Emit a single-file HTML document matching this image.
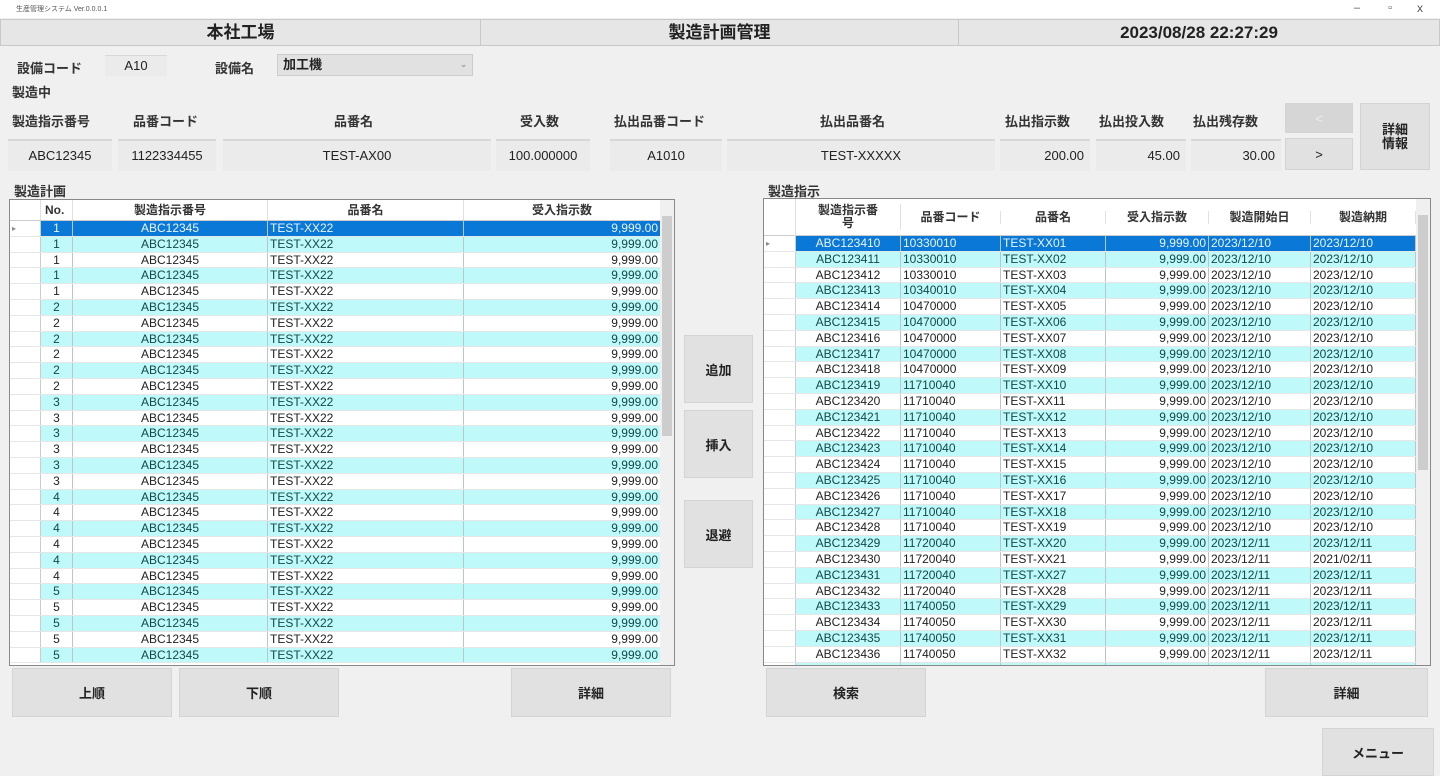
<!DOCTYPE html>
<html><head><meta charset="utf-8"><style>
*{box-sizing:border-box;margin:0;padding:0}
body{width:1440px;height:776px;background:#f0f0f0;font-family:"Liberation Sans","Noto Sans CJK JP",sans-serif;font-size:13px;color:#222;position:relative;overflow:hidden}
.a{position:absolute}
.tb{left:0;top:0;width:1440px;height:18px;background:#fff;font-size:7px;color:#555;padding:4px 0 0 16px}
.hd{top:19px;height:27px;background:#e6e6e6;border:1px solid #c8c8c8;font-weight:bold;font-size:17px;text-align:center;line-height:25px}
.lb{font-size:13px;font-weight:bold;color:#333}
.bx{background:#ebebeb;border-top:2px solid #d8d8d8;height:32px;top:139px;line-height:30px;font-size:13px;text-align:center}
.btn{background:#e1e1e1;border:1px solid #d4d4d4;text-align:center;font-weight:bold;font-size:13px;display:flex;align-items:center;justify-content:center}
.tbl{background:#fff;border:1px solid #888;overflow:hidden}
.r{display:flex;height:15.8px;line-height:15.8px;font-size:12px;border-bottom:1px solid #e6e6e6}
.r div{border-right:1px solid #b8c8c8;white-space:nowrap;overflow:hidden;padding:0 2px}
.r .rh{background:#fff;border-right:1px solid #ccc}
.c div:not(.rh){background:#bff9f9;color:#134848}
.s div:not(.rh){background:#0a78d7;color:#e8f4ff}
.ce{text-align:center}.rt{text-align:right}
.h{display:flex;font-size:12px;font-weight:bold;color:#333;background:#fff;border-bottom:1px solid #ccc}
.h div{text-align:center;border-right:1px solid #e0e0e0}
.sb{position:absolute;right:0;top:0;bottom:0;width:14px;background:#f0f0f0}
</style></head><body>
<div class="a tb">生産管理システム Ver.0.0.0.1</div>
<div class="a" style="right:80px;top:2px;font-size:11px;color:#555">–</div>
<div class="a" style="right:48px;top:2px;font-size:11px;color:#555">▫</div>
<div class="a" style="right:17px;top:1px;font-size:12px;color:#555">x</div>
<div class="a hd" style="left:0;width:481px">本社工場</div>
<div class="a hd" style="left:480px;width:479px">製造計画管理</div>
<div class="a hd" style="left:958px;width:482px">2023/08/28 22:27:29</div>

<div class="a lb" style="left:17px;top:58px">設備コード</div>
<div class="a" style="left:105px;top:55px;width:62px;height:21px;background:#ebebeb;border-top:1px solid #d8d8d8;text-align:center;line-height:20px">A10</div>
<div class="a lb" style="left:215px;top:58px">設備名</div>
<div class="a" style="left:277px;top:54px;width:196px;height:22px;background:#e1e1e1;border:1px solid #ccc;font-weight:bold;line-height:20px;padding-left:5px">加工機<span style="position:absolute;right:5px;font-size:8px;color:#999">⌄</span></div>
<div class="a lb" style="left:12px;top:82px">製造中</div>

<div class="a lb" style="left:12px;top:111px">製造指示番号</div>
<div class="a lb" style="left:133px;top:111px">品番コード</div>
<div class="a lb" style="left:334px;top:111px">品番名</div>
<div class="a lb" style="left:520px;top:111px">受入数</div>
<div class="a lb" style="left:614px;top:111px">払出品番コード</div>
<div class="a lb" style="left:820px;top:111px">払出品番名</div>
<div class="a lb" style="left:1005px;top:111px">払出指示数</div>
<div class="a lb" style="left:1099px;top:111px">払出投入数</div>
<div class="a lb" style="left:1193px;top:111px">払出残存数</div>

<div class="a bx" style="left:8px;width:104px">ABC12345</div>
<div class="a bx" style="left:118px;width:98px">1122334455</div>
<div class="a bx" style="left:223px;width:268px">TEST-AX00</div>
<div class="a bx" style="left:496px;width:94px">100.000000</div>
<div class="a bx" style="left:610px;width:112px">A1010</div>
<div class="a bx" style="left:727px;width:268px">TEST-XXXXX</div>
<div class="a bx" style="left:1000px;width:90px;text-align:right;padding-right:6px">200.00</div>
<div class="a bx" style="left:1096px;width:90px;text-align:right;padding-right:6px">45.00</div>
<div class="a bx" style="left:1191px;width:90px;text-align:right;padding-right:6px">30.00</div>
<div class="a btn" style="left:1285px;top:103px;width:68px;height:30px;background:#d6d6d6;color:#eee;font-weight:normal">&lt;</div>
<div class="a btn" style="left:1285px;top:138px;width:68px;height:32px;font-weight:normal">&gt;</div>
<div class="a btn" style="left:1360px;top:103px;width:70px;height:67px;line-height:14px">詳細<br>情報</div>

<div class="a lb" style="left:14px;top:181px">製造計画</div>
<div class="a lb" style="left:768px;top:181px">製造指示</div>

<div class="a tbl" style="left:9px;top:199px;width:666px;height:467px">
<div class="h" style="height:21px;line-height:21px"><div style="width:31px"></div><div style="width:32px;text-align:left;padding-left:4px">No.</div><div style="width:195px">製造指示番号</div><div style="width:196px">品番名</div><div style="width:197px">受入指示数</div></div>
<div id="L">
<div class="r s"><div class="rh" style="width:31px;color:#888;font-size:8px">▸</div><div class="ce" style="width:32px">1</div><div class="ce" style="width:195px">ABC12345</div><div style="width:196px">TEST-XX22</div><div class="rt" style="width:197px">9,999.00</div></div>
<div class="r c"><div class="rh" style="width:31px"></div><div class="ce" style="width:32px">1</div><div class="ce" style="width:195px">ABC12345</div><div style="width:196px">TEST-XX22</div><div class="rt" style="width:197px">9,999.00</div></div>
<div class="r"><div class="rh" style="width:31px"></div><div class="ce" style="width:32px">1</div><div class="ce" style="width:195px">ABC12345</div><div style="width:196px">TEST-XX22</div><div class="rt" style="width:197px">9,999.00</div></div>
<div class="r c"><div class="rh" style="width:31px"></div><div class="ce" style="width:32px">1</div><div class="ce" style="width:195px">ABC12345</div><div style="width:196px">TEST-XX22</div><div class="rt" style="width:197px">9,999.00</div></div>
<div class="r"><div class="rh" style="width:31px"></div><div class="ce" style="width:32px">1</div><div class="ce" style="width:195px">ABC12345</div><div style="width:196px">TEST-XX22</div><div class="rt" style="width:197px">9,999.00</div></div>
<div class="r c"><div class="rh" style="width:31px"></div><div class="ce" style="width:32px">2</div><div class="ce" style="width:195px">ABC12345</div><div style="width:196px">TEST-XX22</div><div class="rt" style="width:197px">9,999.00</div></div>
<div class="r"><div class="rh" style="width:31px"></div><div class="ce" style="width:32px">2</div><div class="ce" style="width:195px">ABC12345</div><div style="width:196px">TEST-XX22</div><div class="rt" style="width:197px">9,999.00</div></div>
<div class="r c"><div class="rh" style="width:31px"></div><div class="ce" style="width:32px">2</div><div class="ce" style="width:195px">ABC12345</div><div style="width:196px">TEST-XX22</div><div class="rt" style="width:197px">9,999.00</div></div>
<div class="r"><div class="rh" style="width:31px"></div><div class="ce" style="width:32px">2</div><div class="ce" style="width:195px">ABC12345</div><div style="width:196px">TEST-XX22</div><div class="rt" style="width:197px">9,999.00</div></div>
<div class="r c"><div class="rh" style="width:31px"></div><div class="ce" style="width:32px">2</div><div class="ce" style="width:195px">ABC12345</div><div style="width:196px">TEST-XX22</div><div class="rt" style="width:197px">9,999.00</div></div>
<div class="r"><div class="rh" style="width:31px"></div><div class="ce" style="width:32px">2</div><div class="ce" style="width:195px">ABC12345</div><div style="width:196px">TEST-XX22</div><div class="rt" style="width:197px">9,999.00</div></div>
<div class="r c"><div class="rh" style="width:31px"></div><div class="ce" style="width:32px">3</div><div class="ce" style="width:195px">ABC12345</div><div style="width:196px">TEST-XX22</div><div class="rt" style="width:197px">9,999.00</div></div>
<div class="r"><div class="rh" style="width:31px"></div><div class="ce" style="width:32px">3</div><div class="ce" style="width:195px">ABC12345</div><div style="width:196px">TEST-XX22</div><div class="rt" style="width:197px">9,999.00</div></div>
<div class="r c"><div class="rh" style="width:31px"></div><div class="ce" style="width:32px">3</div><div class="ce" style="width:195px">ABC12345</div><div style="width:196px">TEST-XX22</div><div class="rt" style="width:197px">9,999.00</div></div>
<div class="r"><div class="rh" style="width:31px"></div><div class="ce" style="width:32px">3</div><div class="ce" style="width:195px">ABC12345</div><div style="width:196px">TEST-XX22</div><div class="rt" style="width:197px">9,999.00</div></div>
<div class="r c"><div class="rh" style="width:31px"></div><div class="ce" style="width:32px">3</div><div class="ce" style="width:195px">ABC12345</div><div style="width:196px">TEST-XX22</div><div class="rt" style="width:197px">9,999.00</div></div>
<div class="r"><div class="rh" style="width:31px"></div><div class="ce" style="width:32px">3</div><div class="ce" style="width:195px">ABC12345</div><div style="width:196px">TEST-XX22</div><div class="rt" style="width:197px">9,999.00</div></div>
<div class="r c"><div class="rh" style="width:31px"></div><div class="ce" style="width:32px">4</div><div class="ce" style="width:195px">ABC12345</div><div style="width:196px">TEST-XX22</div><div class="rt" style="width:197px">9,999.00</div></div>
<div class="r"><div class="rh" style="width:31px"></div><div class="ce" style="width:32px">4</div><div class="ce" style="width:195px">ABC12345</div><div style="width:196px">TEST-XX22</div><div class="rt" style="width:197px">9,999.00</div></div>
<div class="r c"><div class="rh" style="width:31px"></div><div class="ce" style="width:32px">4</div><div class="ce" style="width:195px">ABC12345</div><div style="width:196px">TEST-XX22</div><div class="rt" style="width:197px">9,999.00</div></div>
<div class="r"><div class="rh" style="width:31px"></div><div class="ce" style="width:32px">4</div><div class="ce" style="width:195px">ABC12345</div><div style="width:196px">TEST-XX22</div><div class="rt" style="width:197px">9,999.00</div></div>
<div class="r c"><div class="rh" style="width:31px"></div><div class="ce" style="width:32px">4</div><div class="ce" style="width:195px">ABC12345</div><div style="width:196px">TEST-XX22</div><div class="rt" style="width:197px">9,999.00</div></div>
<div class="r"><div class="rh" style="width:31px"></div><div class="ce" style="width:32px">4</div><div class="ce" style="width:195px">ABC12345</div><div style="width:196px">TEST-XX22</div><div class="rt" style="width:197px">9,999.00</div></div>
<div class="r c"><div class="rh" style="width:31px"></div><div class="ce" style="width:32px">5</div><div class="ce" style="width:195px">ABC12345</div><div style="width:196px">TEST-XX22</div><div class="rt" style="width:197px">9,999.00</div></div>
<div class="r"><div class="rh" style="width:31px"></div><div class="ce" style="width:32px">5</div><div class="ce" style="width:195px">ABC12345</div><div style="width:196px">TEST-XX22</div><div class="rt" style="width:197px">9,999.00</div></div>
<div class="r c"><div class="rh" style="width:31px"></div><div class="ce" style="width:32px">5</div><div class="ce" style="width:195px">ABC12345</div><div style="width:196px">TEST-XX22</div><div class="rt" style="width:197px">9,999.00</div></div>
<div class="r"><div class="rh" style="width:31px"></div><div class="ce" style="width:32px">5</div><div class="ce" style="width:195px">ABC12345</div><div style="width:196px">TEST-XX22</div><div class="rt" style="width:197px">9,999.00</div></div>
<div class="r c"><div class="rh" style="width:31px"></div><div class="ce" style="width:32px">5</div><div class="ce" style="width:195px">ABC12345</div><div style="width:196px">TEST-XX22</div><div class="rt" style="width:197px">9,999.00</div></div>
</div>
<div class="sb"><div style="position:absolute;left:2px;top:16px;width:10px;height:220px;background:#cdcdcd"></div></div>
</div>

<div class="a btn" style="left:684px;top:335px;width:69px;height:68px">追加</div>
<div class="a btn" style="left:684px;top:410px;width:69px;height:68px">挿入</div>
<div class="a btn" style="left:684px;top:500px;width:69px;height:68px">退避</div>

<div class="a tbl" style="left:763px;top:198px;width:668px;height:468px">
<div class="h" style="height:37px;align-items:center;line-height:13px"><div style="width:32px;height:37px"></div><div style="width:105px">製造指示番<br>号</div><div style="width:100px">品番コード</div><div style="width:105px">品番名</div><div style="width:103px">受入指示数</div><div style="width:102px">製造開始日</div><div style="width:105px">製造納期</div></div>
<div>
<div class="r s"><div class="rh" style="width:32px;color:#888;font-size:8px">▸</div><div class="ce" style="width:105px">ABC123410</div><div style="width:100px">10330010</div><div style="width:105px">TEST-XX01</div><div class="rt" style="width:103px">9,999.00</div><div style="width:102px">2023/12/10</div><div style="width:105px">2023/12/10</div></div>
<div class="r c"><div class="rh" style="width:32px"></div><div class="ce" style="width:105px">ABC123411</div><div style="width:100px">10330010</div><div style="width:105px">TEST-XX02</div><div class="rt" style="width:103px">9,999.00</div><div style="width:102px">2023/12/10</div><div style="width:105px">2023/12/10</div></div>
<div class="r"><div class="rh" style="width:32px"></div><div class="ce" style="width:105px">ABC123412</div><div style="width:100px">10330010</div><div style="width:105px">TEST-XX03</div><div class="rt" style="width:103px">9,999.00</div><div style="width:102px">2023/12/10</div><div style="width:105px">2023/12/10</div></div>
<div class="r c"><div class="rh" style="width:32px"></div><div class="ce" style="width:105px">ABC123413</div><div style="width:100px">10340010</div><div style="width:105px">TEST-XX04</div><div class="rt" style="width:103px">9,999.00</div><div style="width:102px">2023/12/10</div><div style="width:105px">2023/12/10</div></div>
<div class="r"><div class="rh" style="width:32px"></div><div class="ce" style="width:105px">ABC123414</div><div style="width:100px">10470000</div><div style="width:105px">TEST-XX05</div><div class="rt" style="width:103px">9,999.00</div><div style="width:102px">2023/12/10</div><div style="width:105px">2023/12/10</div></div>
<div class="r c"><div class="rh" style="width:32px"></div><div class="ce" style="width:105px">ABC123415</div><div style="width:100px">10470000</div><div style="width:105px">TEST-XX06</div><div class="rt" style="width:103px">9,999.00</div><div style="width:102px">2023/12/10</div><div style="width:105px">2023/12/10</div></div>
<div class="r"><div class="rh" style="width:32px"></div><div class="ce" style="width:105px">ABC123416</div><div style="width:100px">10470000</div><div style="width:105px">TEST-XX07</div><div class="rt" style="width:103px">9,999.00</div><div style="width:102px">2023/12/10</div><div style="width:105px">2023/12/10</div></div>
<div class="r c"><div class="rh" style="width:32px"></div><div class="ce" style="width:105px">ABC123417</div><div style="width:100px">10470000</div><div style="width:105px">TEST-XX08</div><div class="rt" style="width:103px">9,999.00</div><div style="width:102px">2023/12/10</div><div style="width:105px">2023/12/10</div></div>
<div class="r"><div class="rh" style="width:32px"></div><div class="ce" style="width:105px">ABC123418</div><div style="width:100px">10470000</div><div style="width:105px">TEST-XX09</div><div class="rt" style="width:103px">9,999.00</div><div style="width:102px">2023/12/10</div><div style="width:105px">2023/12/10</div></div>
<div class="r c"><div class="rh" style="width:32px"></div><div class="ce" style="width:105px">ABC123419</div><div style="width:100px">11710040</div><div style="width:105px">TEST-XX10</div><div class="rt" style="width:103px">9,999.00</div><div style="width:102px">2023/12/10</div><div style="width:105px">2023/12/10</div></div>
<div class="r"><div class="rh" style="width:32px"></div><div class="ce" style="width:105px">ABC123420</div><div style="width:100px">11710040</div><div style="width:105px">TEST-XX11</div><div class="rt" style="width:103px">9,999.00</div><div style="width:102px">2023/12/10</div><div style="width:105px">2023/12/10</div></div>
<div class="r c"><div class="rh" style="width:32px"></div><div class="ce" style="width:105px">ABC123421</div><div style="width:100px">11710040</div><div style="width:105px">TEST-XX12</div><div class="rt" style="width:103px">9,999.00</div><div style="width:102px">2023/12/10</div><div style="width:105px">2023/12/10</div></div>
<div class="r"><div class="rh" style="width:32px"></div><div class="ce" style="width:105px">ABC123422</div><div style="width:100px">11710040</div><div style="width:105px">TEST-XX13</div><div class="rt" style="width:103px">9,999.00</div><div style="width:102px">2023/12/10</div><div style="width:105px">2023/12/10</div></div>
<div class="r c"><div class="rh" style="width:32px"></div><div class="ce" style="width:105px">ABC123423</div><div style="width:100px">11710040</div><div style="width:105px">TEST-XX14</div><div class="rt" style="width:103px">9,999.00</div><div style="width:102px">2023/12/10</div><div style="width:105px">2023/12/10</div></div>
<div class="r"><div class="rh" style="width:32px"></div><div class="ce" style="width:105px">ABC123424</div><div style="width:100px">11710040</div><div style="width:105px">TEST-XX15</div><div class="rt" style="width:103px">9,999.00</div><div style="width:102px">2023/12/10</div><div style="width:105px">2023/12/10</div></div>
<div class="r c"><div class="rh" style="width:32px"></div><div class="ce" style="width:105px">ABC123425</div><div style="width:100px">11710040</div><div style="width:105px">TEST-XX16</div><div class="rt" style="width:103px">9,999.00</div><div style="width:102px">2023/12/10</div><div style="width:105px">2023/12/10</div></div>
<div class="r"><div class="rh" style="width:32px"></div><div class="ce" style="width:105px">ABC123426</div><div style="width:100px">11710040</div><div style="width:105px">TEST-XX17</div><div class="rt" style="width:103px">9,999.00</div><div style="width:102px">2023/12/10</div><div style="width:105px">2023/12/10</div></div>
<div class="r c"><div class="rh" style="width:32px"></div><div class="ce" style="width:105px">ABC123427</div><div style="width:100px">11710040</div><div style="width:105px">TEST-XX18</div><div class="rt" style="width:103px">9,999.00</div><div style="width:102px">2023/12/10</div><div style="width:105px">2023/12/10</div></div>
<div class="r"><div class="rh" style="width:32px"></div><div class="ce" style="width:105px">ABC123428</div><div style="width:100px">11710040</div><div style="width:105px">TEST-XX19</div><div class="rt" style="width:103px">9,999.00</div><div style="width:102px">2023/12/10</div><div style="width:105px">2023/12/10</div></div>
<div class="r c"><div class="rh" style="width:32px"></div><div class="ce" style="width:105px">ABC123429</div><div style="width:100px">11720040</div><div style="width:105px">TEST-XX20</div><div class="rt" style="width:103px">9,999.00</div><div style="width:102px">2023/12/11</div><div style="width:105px">2023/12/11</div></div>
<div class="r"><div class="rh" style="width:32px"></div><div class="ce" style="width:105px">ABC123430</div><div style="width:100px">11720040</div><div style="width:105px">TEST-XX21</div><div class="rt" style="width:103px">9,999.00</div><div style="width:102px">2023/12/11</div><div style="width:105px">2021/02/11</div></div>
<div class="r c"><div class="rh" style="width:32px"></div><div class="ce" style="width:105px">ABC123431</div><div style="width:100px">11720040</div><div style="width:105px">TEST-XX27</div><div class="rt" style="width:103px">9,999.00</div><div style="width:102px">2023/12/11</div><div style="width:105px">2023/12/11</div></div>
<div class="r"><div class="rh" style="width:32px"></div><div class="ce" style="width:105px">ABC123432</div><div style="width:100px">11720040</div><div style="width:105px">TEST-XX28</div><div class="rt" style="width:103px">9,999.00</div><div style="width:102px">2023/12/11</div><div style="width:105px">2023/12/11</div></div>
<div class="r c"><div class="rh" style="width:32px"></div><div class="ce" style="width:105px">ABC123433</div><div style="width:100px">11740050</div><div style="width:105px">TEST-XX29</div><div class="rt" style="width:103px">9,999.00</div><div style="width:102px">2023/12/11</div><div style="width:105px">2023/12/11</div></div>
<div class="r"><div class="rh" style="width:32px"></div><div class="ce" style="width:105px">ABC123434</div><div style="width:100px">11740050</div><div style="width:105px">TEST-XX30</div><div class="rt" style="width:103px">9,999.00</div><div style="width:102px">2023/12/11</div><div style="width:105px">2023/12/11</div></div>
<div class="r c"><div class="rh" style="width:32px"></div><div class="ce" style="width:105px">ABC123435</div><div style="width:100px">11740050</div><div style="width:105px">TEST-XX31</div><div class="rt" style="width:103px">9,999.00</div><div style="width:102px">2023/12/11</div><div style="width:105px">2023/12/11</div></div>
<div class="r"><div class="rh" style="width:32px"></div><div class="ce" style="width:105px">ABC123436</div><div style="width:100px">11740050</div><div style="width:105px">TEST-XX32</div><div class="rt" style="width:103px">9,999.00</div><div style="width:102px">2023/12/11</div><div style="width:105px">2023/12/11</div></div>
<div class="r c"><div class="rh" style="width:32px"></div><div class="ce" style="width:105px">ABC123437</div><div style="width:100px">11740050</div><div style="width:105px">TEST-XX33</div><div class="rt" style="width:103px">9,999.00</div><div style="width:102px">2023/12/11</div><div style="width:105px">2023/12/11</div></div>
</div>
<div class="sb"><div style="position:absolute;left:2px;top:16px;width:10px;height:255px;background:#cdcdcd"></div></div>
</div>

<div class="a btn" style="left:12px;top:668px;width:160px;height:49px">上順</div>
<div class="a btn" style="left:179px;top:668px;width:160px;height:49px">下順</div>
<div class="a btn" style="left:511px;top:668px;width:160px;height:49px">詳細</div>
<div class="a btn" style="left:766px;top:668px;width:160px;height:49px">検索</div>
<div class="a btn" style="left:1265px;top:668px;width:163px;height:49px">詳細</div>
<div class="a btn" style="left:1322px;top:728px;width:112px;height:48px">メニュー</div>
</body></html>
